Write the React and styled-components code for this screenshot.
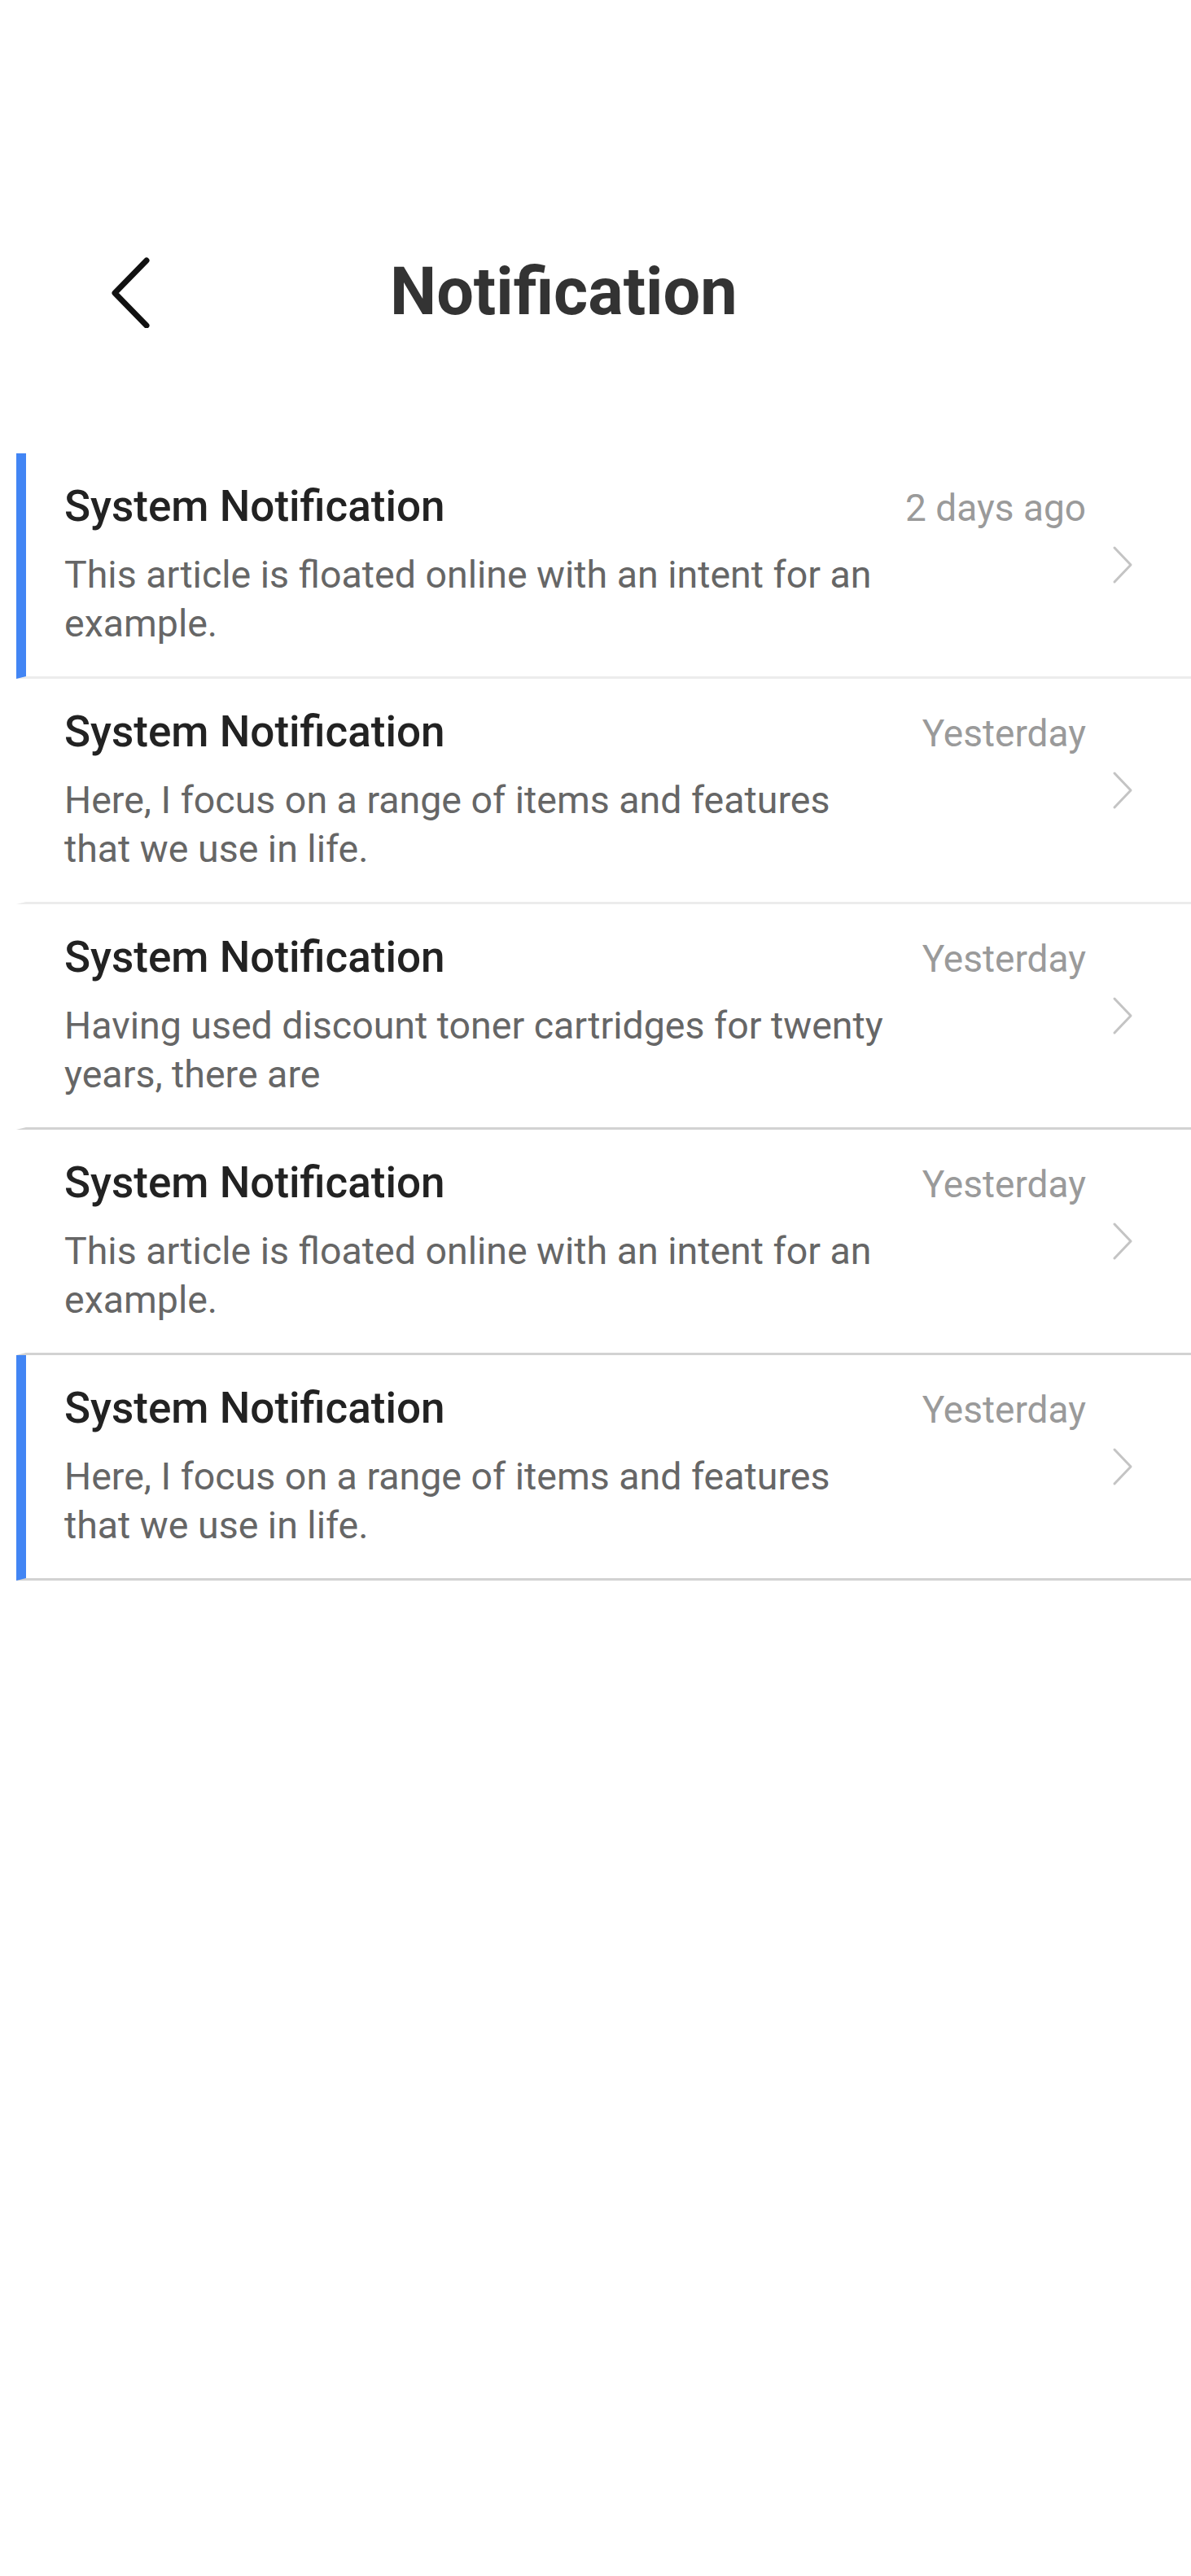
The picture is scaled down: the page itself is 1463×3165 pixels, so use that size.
import React from "react";
import styled, { createGlobalStyle } from "styled-components";

const Global = createGlobalStyle`
  html, body { margin: 0; padding: 0; background: #ffffff; }
  body { font-family: Roboto, "Noto Sans", "Liberation Sans", sans-serif; }
`;

const Page = styled.div`
  width: 1463px;
  min-height: 3165px;
  background: #fff;
  padding-top: 298px;
  box-sizing: border-box;
`;

const Header = styled.header`
  display: flex;
  align-items: center;
  height: 120px;
  padding-left: 133px;
`;

const BackButton = styled.button`
  display: flex;
  align-items: center;
  justify-content: center;
  width: 56px;
  height: 90px;
  padding: 0;
  border: none;
  background: none;
  cursor: pointer;
`;

const Title = styled.h1`
  margin: 0 0 0 290px;
  font-family: Roboto, "Liberation Sans", sans-serif;
  font-weight: 700;
  font-size: 81px;
  color: #333333;
  line-height: 1;
`;

const List = styled.ul`
  list-style: none;
  margin: 139px 0 0 20px;
  padding: 0;
`;

const Item = styled.li`
  display: flex;
  align-items: center;
  border-left: 12px solid ${(p) => (p.$accent ? "#4285f4" : "transparent")};
  border-bottom: 3px solid ${(p) => (p.$dark ? "#d2d2d2" : "#ececec")};
  padding: 35px 70px 35px 47px;
`;

const Content = styled.div`
  flex: 1;
  min-width: 0;
`;

const HeadRow = styled.div`
  display: flex;
  justify-content: space-between;
  align-items: baseline;
  line-height: 60px;
`;

const ItemTitle = styled.span`
  font-size: 53px;
  font-weight: 500;
  color: #222222;
`;

const Time = styled.span`
  font-size: 46px;
  color: #9a9a9a;
`;

const Desc = styled.p`
  margin: 22px 0 0;
  max-width: 1025px;
  font-size: 46.5px;
  line-height: 60px;
  color: #666666;
`;

const Arrow = styled.span`
  display: flex;
  margin-left: 31px;
  width: 28px;
`;

const items = [
  { time: "2 days ago", text: "This article is floated online with an intent for an example.", accent: true },
  { time: "Yesterday", text: "Here, I focus on a range of items and features that we use in life." },
  { time: "Yesterday", text: "Having used discount toner cartridges for twenty years, there are", dark: true },
  { time: "Yesterday", text: "This article is floated online with an intent for an example.", dark: true },
  { time: "Yesterday", text: "Here, I focus on a range of items and features that we use in life.", accent: true, dark: true },
];

export default function App() {
  return (
    <Page>
      <Global />
      <Header>
        <BackButton aria-label="Back">
          <svg width="56" height="90" viewBox="0 0 56 90">
            <polyline points="47,7 8,47 47,87" fill="none" stroke="#111" strokeWidth="7" strokeLinecap="round" strokeLinejoin="round" />
          </svg>
        </BackButton>
        <Title>Notification</Title>
      </Header>
      <List>
        {items.map((it, i) => (
          <Item key={i} $accent={it.accent} $dark={it.dark}>
            <Content>
              <HeadRow>
                <ItemTitle>System Notification</ItemTitle>
                <Time>{it.time}</Time>
              </HeadRow>
              <Desc>{it.text}</Desc>
            </Content>
            <Arrow>
              <svg width="28" height="50" viewBox="0 0 28 50">
                <polyline points="4,4 24,25 4,46" fill="none" stroke="#c4c4c4" strokeWidth="3" strokeLinecap="round" strokeLinejoin="round" />
              </svg>
            </Arrow>
          </Item>
        ))}
      </List>
    </Page>
  );
}
